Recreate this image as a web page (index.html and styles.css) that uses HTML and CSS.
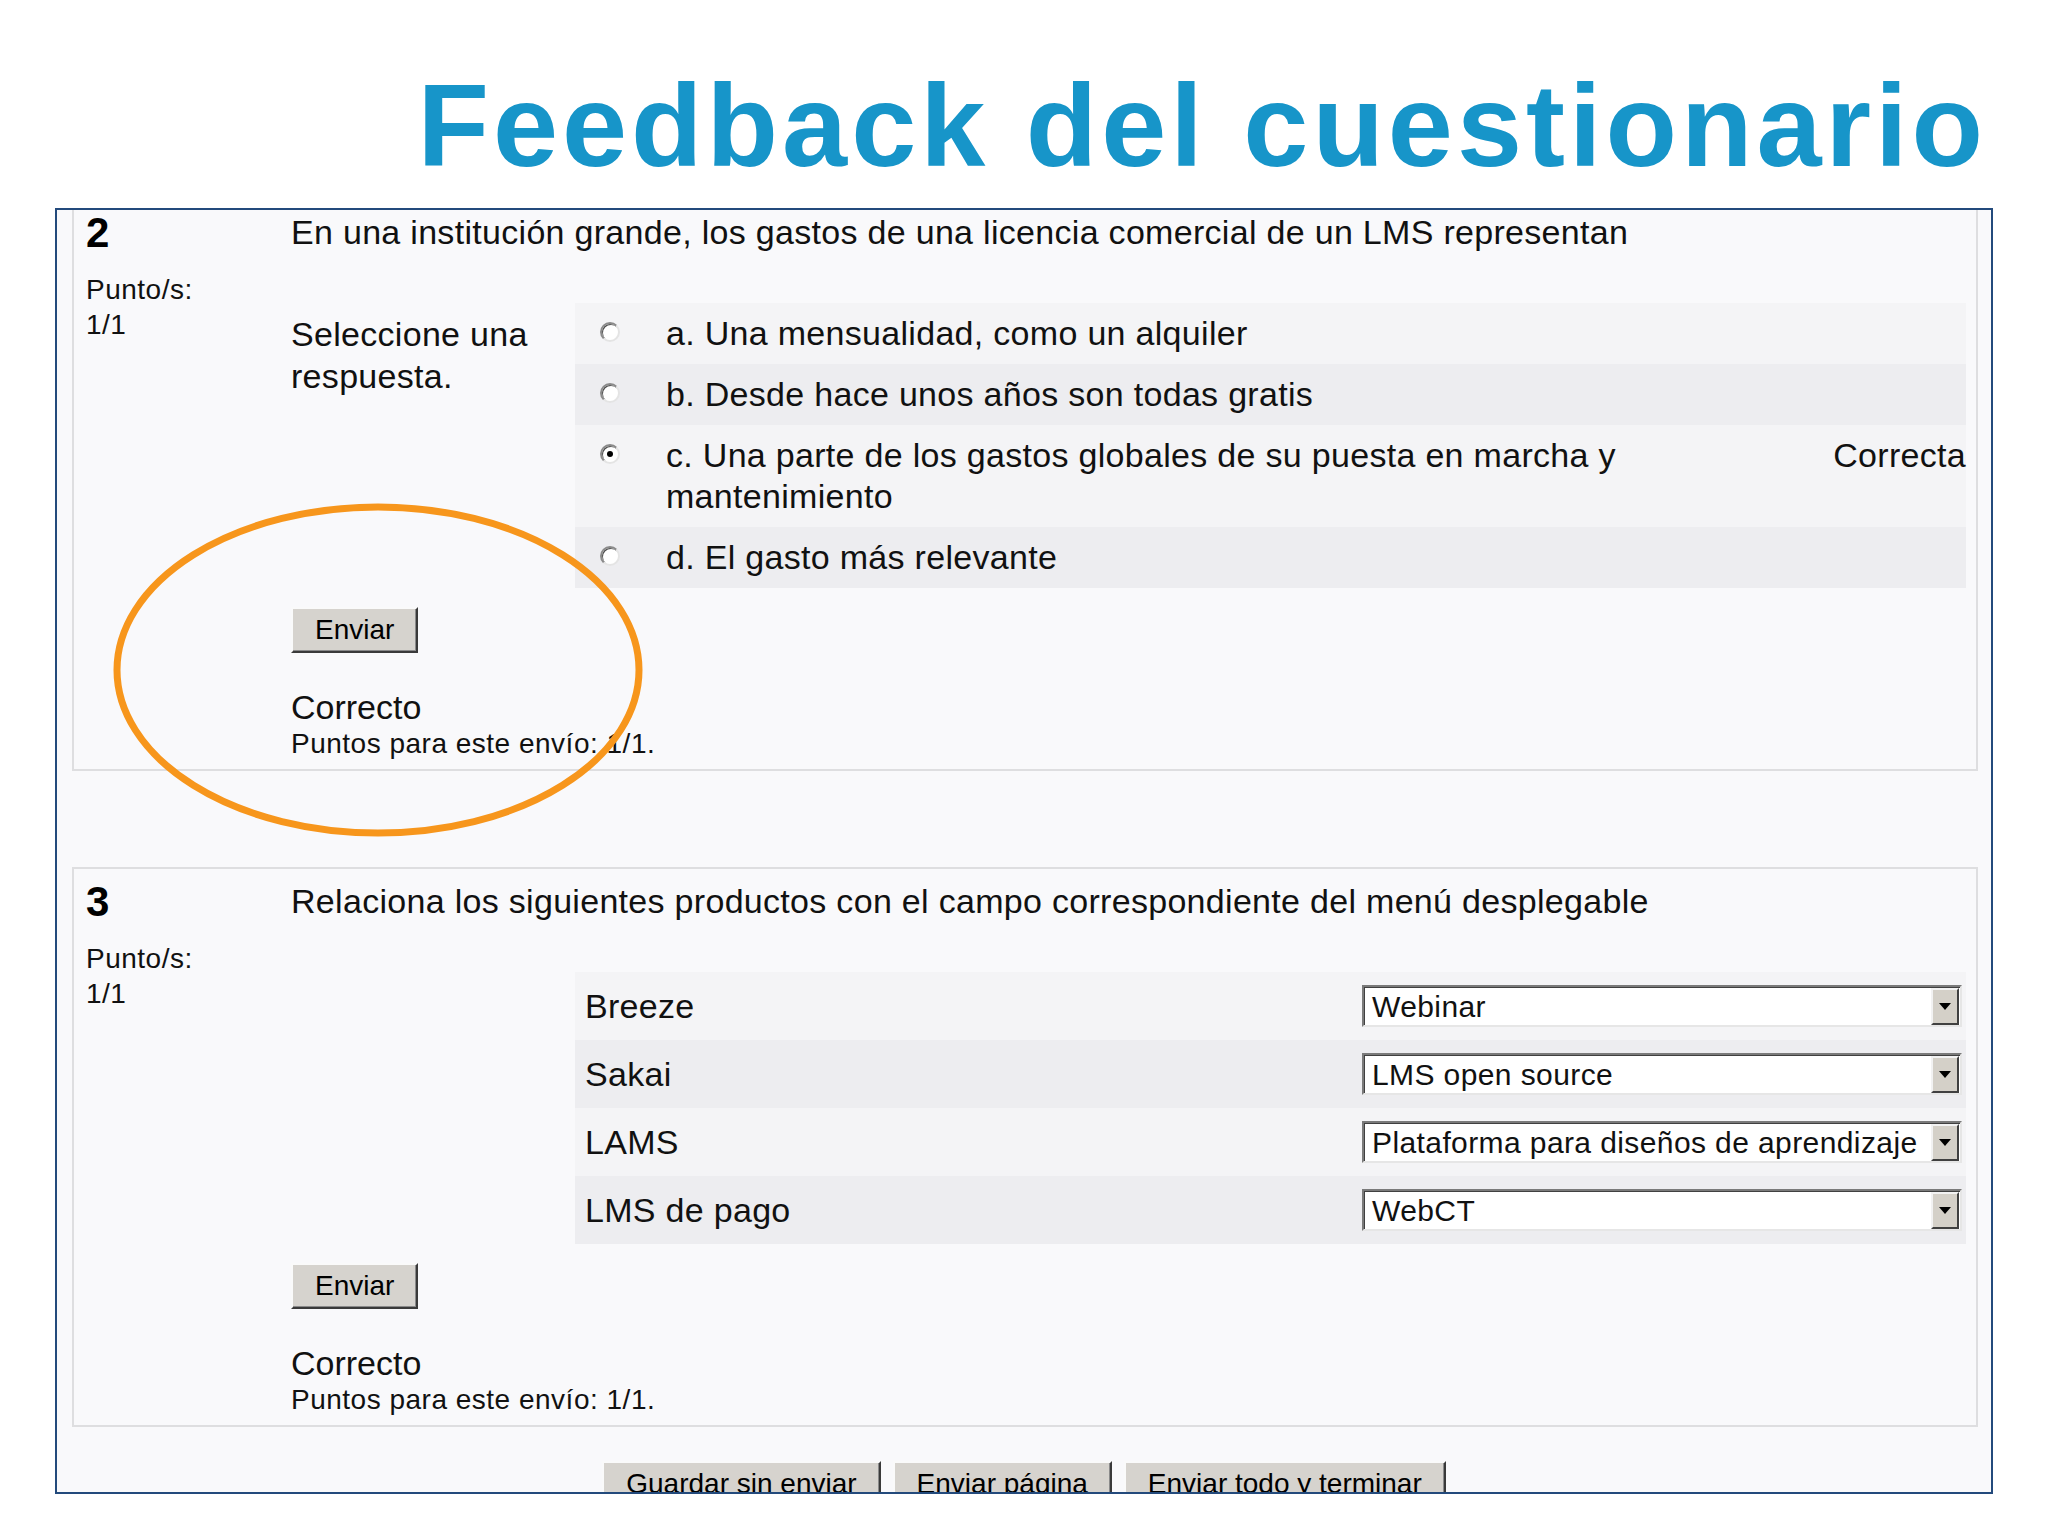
FILE: index.html
```html
<!DOCTYPE html>
<html lang="es">
<head>
  <meta charset="UTF-8">
  <title>Feedback del cuestionario</title>
  <link rel="stylesheet" href="styles.css">
</head>
<body>
<div class="slide">

  <h1 class="title">Feedback del cuestionario</h1>

  <div class="shot">

    <!-- pregunta 2: opción múltiple -->
    <div class="que first">
      <div class="info">
        <div class="no">2</div>
        <div class="grade">Punto/s:<br>1/1</div>
      </div>
      <div class="content">
        <div class="qtext">En una institución grande, los gastos de una licencia comercial de un LMS representan</div>
        <div class="ablock">
          <div class="prompt">Seleccione una<br>respuesta.</div>
          <div class="answer">
            <div class="r0"><span class="radio"></span><span class="lbl">a. Una mensualidad, como un alquiler</span><span class="fb"></span></div>
            <div class="r1"><span class="radio"></span><span class="lbl">b. Desde hace unos años son todas gratis</span><span class="fb"></span></div>
            <div class="r0"><span class="radio checked"></span><span class="lbl">c. Una parte de los gastos globales de su puesta en marcha y mantenimiento</span><span class="fb">Correcta</span></div>
            <div class="r1"><span class="radio"></span><span class="lbl">d. El gasto más relevante</span><span class="fb"></span></div>
          </div>
        </div>
        <button class="btn">Enviar</button>
        <div class="feedback">
          <div class="correctness">Correcto</div>
          <div class="details">Puntos para este envío: 1/1.</div>
        </div>
      </div>
    </div>

    <!-- pregunta 3: emparejamiento -->
    <div class="que">
      <div class="info">
        <div class="no">3</div>
        <div class="grade">Punto/s:<br>1/1</div>
      </div>
      <div class="content">
        <div class="qtext">Relaciona los siguientes productos con el campo correspondiente del menú desplegable</div>
        <div class="ablock">
          <div class="prompt"></div>
          <div class="answer match">
            <div class="r0"><span class="lbl">Breeze</span><div class="select"><span class="val">Webinar</span><span class="arrow"></span></div></div>
            <div class="r1"><span class="lbl">Sakai</span><div class="select"><span class="val">LMS open source</span><span class="arrow"></span></div></div>
            <div class="r0"><span class="lbl">LAMS</span><div class="select"><span class="val">Plataforma para diseños de aprendizaje</span><span class="arrow"></span></div></div>
            <div class="r1"><span class="lbl">LMS de pago</span><div class="select"><span class="val">WebCT</span><span class="arrow"></span></div></div>
          </div>
        </div>
        <button class="btn">Enviar</button>
        <div class="feedback">
          <div class="correctness">Correcto</div>
          <div class="details">Puntos para este envío: 1/1.</div>
        </div>
      </div>
    </div>

    <div class="submitbtns">
      <button class="btn">Guardar sin enviar</button>
      <button class="btn">Enviar página</button>
      <button class="btn">Enviar todo y terminar</button>
    </div>
  </div>

  <!-- marca naranja sobre el resultado -->
  <svg class="mark" width="540" height="340" viewBox="0 0 540 340">
    <ellipse cx="268" cy="170" rx="261" ry="163" fill="none" stroke="#f7961c" stroke-width="7"/>
  </svg>

</div>
</body>
</html>
```

FILE: styles.css
```css
body {
  margin: 0;
  background: #fff;
  font-family: "Liberation Sans", Arial, sans-serif;
  color: #111;
}
.slide {
  position: relative;
  width: 2048px;
  height: 1536px;
}
.title {
  margin: 0;
  padding: 67px 61px 0 0;
  text-align: right;
  font-size: 117px;
  line-height: 117px;
  letter-spacing: 4px;
  font-weight: bold;
  color: #1795c9;
}

/* captura del cuestionario */
.shot {
  margin: 24px 0 0 55px;
  width: 1934px;
  height: 1282px;
  border: 2px solid #234a7c;
  background: #f9f9fb;
  overflow: hidden;
}
.que {
  display: flex;
  margin: 96px 13px 0 15px;
  padding: 12px 10px 8px 12px;
  border: 2px solid #dedee0;
  background: #f9f9fb;
}
.que.first { margin-top: -12px; }

.info { width: 205px; flex: none; }
.no {
  font-size: 42px;
  line-height: 42px;
  font-weight: bold;
  color: #000;
}
.grade {
  margin-top: 18px;
  font-size: 28px;
  line-height: 35px;
  letter-spacing: 0.5px;
}

.content { flex: 1; }
.qtext {
  font-size: 34px;
  line-height: 40px;
  letter-spacing: 0.3px;
}
.ablock {
  display: flex;
  margin-top: 51px;
}
.prompt {
  width: 284px;
  flex: none;
  padding-top: 10px;
  font-size: 34px;
  line-height: 42px;
  letter-spacing: 0.3px;
}
.answer { flex: 1; }
.answer .r0 { background: #f4f4f6; }
.answer .r1 { background: #ededf0; }
.answer > div {
  display: flex;
  align-items: flex-start;
  padding: 10px 0 10px 25px;
  font-size: 34px;
  line-height: 41px;
  letter-spacing: 0.3px;
}
.radio {
  flex: none;
  position: relative;
  width: 16px;
  height: 16px;
  margin: 9px 46px 0 0;
  border: 2px solid;
  border-color: #8a8a8a #e4e4e4 #e4e4e4 #8a8a8a;
  border-radius: 50%;
  background: #fff;
  box-shadow: inset 1px 1px 0 #505050;
}
.radio.checked::after {
  content: "";
  position: absolute;
  left: 5px;
  top: 5px;
  width: 6px;
  height: 6px;
  border-radius: 50%;
  background: #000;
}
.lbl { flex: 1; }
.fb {
  width: 180px;
  flex: none;
  text-align: right;
}

/* emparejamiento */
.match > div {
  align-items: center;
  padding: 13px 4px 13px 10px;
}
.select {
  display: flex;
  width: 596px;
  height: 38px;
  border: 2px solid;
  border-color: #7a7a7a #e6e6e6 #e6e6e6 #7a7a7a;
  box-shadow: inset 1px 1px 0 #404040;
  background: #fff;
}
.val {
  flex: 1;
  padding-left: 8px;
  font-size: 30px;
  line-height: 39px;
  letter-spacing: 0.4px;
  white-space: nowrap;
  overflow: hidden;
}
.arrow {
  position: relative;
  width: 24px;
  flex: none;
  margin: 1px 1px 0 0;
  border: 2px solid;
  border-color: #f2f2f2 #404040 #404040 #f2f2f2;
  background: #d4d0c8;
}
.arrow::after {
  content: "";
  position: absolute;
  left: 6px;
  top: 13px;
  border-left: 6px solid transparent;
  border-right: 6px solid transparent;
  border-top: 7px solid #000;
}

.btn {
  display: block;
  height: 46px;
  margin-top: 19px;
  padding: 0 22px;
  font-family: "Liberation Sans", Arial, sans-serif;
  font-size: 28px;
  color: #000;
  background: #d6d3ce;
  border: 2px solid;
  border-color: #fafafa #3a3a3a #3a3a3a #fafafa;
  box-shadow: inset -1px -1px 0 #8a8a8a;
}

.feedback { margin-top: 34px; }
.correctness {
  font-size: 34px;
  line-height: 40px;
}
.details {
  font-size: 28px;
  line-height: 34px;
  letter-spacing: 0.5px;
}

.submitbtns {
  display: flex;
  justify-content: center;
  gap: 12px;
  margin-top: 34px;
}
.submitbtns .btn { margin-top: 0; }

.mark {
  position: absolute;
  left: 110px;
  top: 500px;
}
```
